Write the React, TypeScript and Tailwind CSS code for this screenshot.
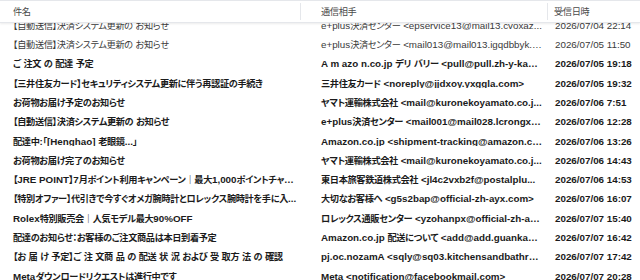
// Lista de correo (estilo Thunderbird): cabecera fija y filas desplazadas un poco hacia arriba.
const cjk = /([\u3000-\u30ff\u4e00-\u9fff\uff00-\uffef]+)/;

type Mail = { subject: string; from: string; date: string; bold: boolean };

const mails: Mail[] = [
  { subject: '【自動送信】決済システム更新の お知らせ', from: 'e+plus決済センター <epservice13@mail13.cvoxaz...', date: '2026/07/04 22:14', bold: false },
  { subject: '【自動送信】決済システム更新の お知らせ', from: 'e+plus決済センター <mail013@mail013.igqdbbyk.c...', date: '2026/07/05 11:50', bold: false },
  { subject: 'ご 注文 の 配達 予定', from: 'A m azo n.co.jp デリ バリー <pull@pull.zh-y-kanqi...', date: '2026/07/05 19:18', bold: true },
  { subject: '【三井住友カード】セキュリティシステム更新に伴う再認証の手続き', from: '三井住友カード <noreply@jjdxoy.yxggla.com>', date: '2026/07/05 19:32', bold: true },
  { subject: 'お荷物お届け予定のお知らせ', from: 'ヤマト運輸株式会社 <mail@kuronekoyamato.co.j...', date: '2026/07/06 7:51', bold: true },
  { subject: '【自動送信】決済システム更新の お知らせ', from: 'e+plus決済センター <mail001@mail028.lcrongxia...', date: '2026/07/06 12:28', bold: true },
  { subject: '配達中:「[Henghao] 老眼鏡...」', from: 'Amazon.co.jp <shipment-tracking@amazon.co.j...', date: '2026/07/06 13:26', bold: true },
  { subject: 'お荷物お届け完了のお知らせ', from: 'ヤマト運輸株式会社 <mail@kuronekoyamato.co.j...', date: '2026/07/06 14:43', bold: true },
  { subject: '【JRE POINT】7月ポイント利用キャンペーン｜最大1,000ポイントチャンス！', from: '東日本旅客鉄道株式会社 <jl4c2vxb2f@postalplu...', date: '2026/07/06 14:53', bold: true },
  { subject: '【特別オファー】代引きで今すぐオメガ腕時計とロレックス腕時計を手に入...', from: '大切なお客様へ <g5s2bap@official-zh-ayx.com>', date: '2026/07/06 16:07', bold: true },
  { subject: 'Rolex特別販売会｜人気モデル最大90%OFF', from: 'ロレックス通販センター <yzohanpx@official-zh-ayx....', date: '2026/07/07 15:40', bold: true },
  { subject: '配達のお知らせ：お客様のご注文商品は本日到着予定', from: 'Amazon.co.jp 配送について <add@add.guankanli...', date: '2026/07/07 16:42', bold: true },
  { subject: '【お 届 け 予定】ご 注 文商 品 の 配送 状 況 および 受 取方 法 の 確認', from: 'pj.oc.nozamA <sqly@sq03.kitchensandbathrem...', date: '2026/07/07 17:42', bold: true },
  { subject: 'Metaダウンロードリクエストは進行中です', from: 'Meta <notification@facebookmail.com>', date: '2026/07/07 20:28', bold: true },
];

// Parte el texto: japonés con su propia fuente y 'palt', latín en Liberation Sans.
function Mixed({ text }: { text: string }) {
  return (
    <>
      {text.split(cjk).map((part, i) =>
        i % 2 === 1 ? (
          <span
            key={i}
            className="font-[Noto_Sans_CJK_JP,sans-serif] text-[9.2px] tracking-[-0.35px] [font-feature-settings:'palt']"
          >
            {part}
          </span>
        ) : (
          <span key={i}>{part}</span>
        ),
      )}
    </>
  );
}

function Header() {
  return (
    <div className="relative z-10 flex h-[23px] items-center border-t border-b border-gray-200 bg-white font-normal text-[#4a4a4a] shadow-[0_1px_2px_rgba(0,0,0,0.08)]">
      <div className="w-[300px] shrink-0 pl-[13px]">
        <Mixed text="件名" />
      </div>
      <div className="h-[17px] w-px shrink-0 bg-gray-200" />
      <div className="w-[246px] shrink-0 pl-5">
        <Mixed text="通信相手" />
      </div>
      <div className="h-[17px] w-px shrink-0 bg-gray-200" />
      <div className="flex-1 pl-[6px]">
        <Mixed text="受信日時" />
      </div>
    </div>
  );
}

export default function App() {
  return (
    <div className="h-[280px] w-[640px] overflow-hidden bg-white font-[Liberation_Sans,Noto_Sans_CJK_JP,sans-serif] text-[9.8px] leading-none">
      <Header />
      <div className="-mt-[7px] flex flex-col">
        {mails.map((m, i) => (
          <div
            key={i}
            className={'flex h-[19.3px] items-center ' + (m.bold ? 'font-bold text-[#1b1b1b]' : 'text-[#3a3a3a]')}
          >
            <div className="w-[300px] shrink-0 truncate pr-[2px] pl-[13px]">
              <Mixed text={m.subject} />
            </div>
            <div className="w-[247px] shrink-0 truncate pr-1 pl-[21px]">
              <Mixed text={m.from} />
            </div>
            <div className="min-w-0 flex-1 pl-2 whitespace-nowrap">{m.date}</div>
          </div>
        ))}
      </div>
    </div>
  );
}
